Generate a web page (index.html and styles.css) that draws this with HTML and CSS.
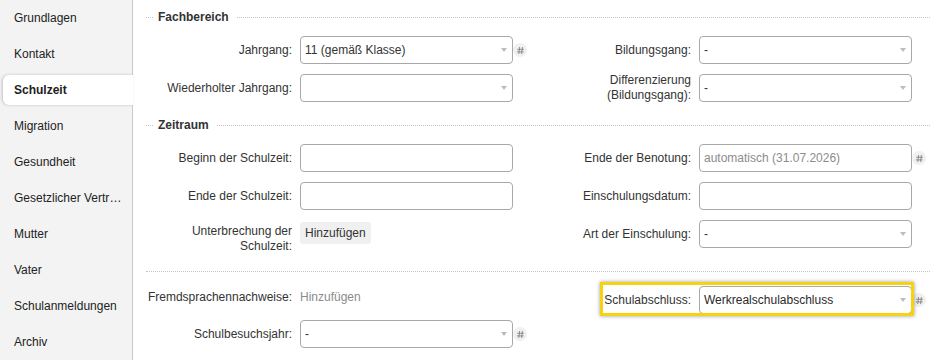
FILE: index.html
```html
<!DOCTYPE html>
<html lang="de">
<head>
  <meta charset="UTF-8">
  <title>Schulzeit</title>
  <link rel="stylesheet" href="styles.css">
</head>
<body>

<div class="app">
  <nav class="sidebar">
    <a class="nav-item">Grundlagen</a>
    <a class="nav-item">Kontakt</a>
    <a class="nav-item active">Schulzeit</a>
    <a class="nav-item">Migration</a>
    <a class="nav-item">Gesundheit</a>
    <a class="nav-item">Gesetzlicher Vertreter</a>
    <a class="nav-item">Mutter</a>
    <a class="nav-item">Vater</a>
    <a class="nav-item">Schulanmeldungen</a>
    <a class="nav-item">Archiv</a>
  </nav>

  <main class="content">
    <div class="section-title">Fachbereich</div>
    <div class="form-grid">
      <div class="field">
        <label class="field-label">Jahrgang:</label>
        <div class="control select"><span class="value">11 (gemäß Klasse)</span><span class="arrow"></span></div>
        <span class="hash"><svg width="9" height="9" viewBox="0 0 9 9"><path d="M3.6 1L2.8 8M6.4 1L5.6 8M1.2 3.3H7.9M0.9 5.9H7.6" stroke="#777" stroke-width="0.8" fill="none"/></svg></span>
      </div>
      <div class="field">
        <label class="field-label">Bildungsgang:</label>
        <div class="control select"><span class="value">-</span><span class="arrow"></span></div>
      </div>
      <div class="field">
        <label class="field-label">Wiederholter Jahrgang:</label>
        <div class="control select"><span class="value"></span><span class="arrow"></span></div>
      </div>
      <div class="field">
        <label class="field-label">Differenzierung (Bildungsgang):</label>
        <div class="control select"><span class="value">-</span><span class="arrow"></span></div>
      </div>
    </div>

    <div class="section-title second">Zeitraum</div>
    <div class="form-grid">
      <div class="field">
        <label class="field-label">Beginn der Schulzeit:</label>
        <div class="control input"></div>
      </div>
      <div class="field">
        <label class="field-label">Ende der Benotung:</label>
        <div class="control input"><span class="placeholder">automatisch (31.07.2026)</span></div>
        <span class="hash"><svg width="9" height="9" viewBox="0 0 9 9"><path d="M3.6 1L2.8 8M6.4 1L5.6 8M1.2 3.3H7.9M0.9 5.9H7.6" stroke="#777" stroke-width="0.8" fill="none"/></svg></span>
      </div>
      <div class="field">
        <label class="field-label">Ende der Schulzeit:</label>
        <div class="control input"></div>
      </div>
      <div class="field">
        <label class="field-label">Einschulungsdatum:</label>
        <div class="control input"></div>
      </div>
      <div class="field field-top">
        <label class="field-label">Unterbrechung der Schulzeit:</label>
        <button class="add-btn">Hinzufügen</button>
      </div>
      <div class="field">
        <label class="field-label">Art der Einschulung:</label>
        <div class="control select"><span class="value">-</span><span class="arrow"></span></div>
      </div>
    </div>

    <div class="divider"></div>

    <div class="form-grid tight">
      <div class="field short">
        <label class="field-label nowrap">Fremdsprachennachweise:</label>
        <a class="add-link">Hinzufügen</a>
      </div>
      <div class="field highlighted">
        <label class="field-label">Schulabschluss:</label>
        <div class="control select"><span class="value dark">Werkrealschulabschluss</span><span class="arrow"></span></div>
        <span class="hash"><svg width="9" height="9" viewBox="0 0 9 9"><path d="M3.6 1L2.8 8M6.4 1L5.6 8M1.2 3.3H7.9M0.9 5.9H7.6" stroke="#777" stroke-width="0.8" fill="none"/></svg></span>
        <span class="spotlight"></span>
      </div>
      <div class="field">
        <label class="field-label">Schulbesuchsjahr:</label>
        <div class="control select"><span class="value">-</span><span class="arrow"></span></div>
        <span class="hash"><svg width="9" height="9" viewBox="0 0 9 9"><path d="M3.6 1L2.8 8M6.4 1L5.6 8M1.2 3.3H7.9M0.9 5.9H7.6" stroke="#777" stroke-width="0.8" fill="none"/></svg></span>
      </div>
    </div>
  </main>
</div>

</body>
</html>
```

FILE: styles.css
```css
body {
  margin: 0;
  font-family: "Liberation Sans", Arial, sans-serif;
  font-size: 12px;
  color: #333;
  background: white;
}

.app {
  display: flex;
  min-height: 360px;
}

.sidebar {
  width: 133px;
  box-sizing: border-box;
  flex-shrink: 0;
  background: #f3f3f3;
  border-right: 1px solid #c9c9c9;
  padding-top: 3px;
  display: flex;
  flex-direction: column;
  gap: 6px;
}

.nav-item {
  display: block;
  height: 30px;
  line-height: 30px;
  margin-left: 3px;
  padding: 0 9px 0 11px;
  color: #222;
  white-space: nowrap;
  overflow: hidden;
  text-overflow: ellipsis;
}

.nav-item.active {
  background: white;
  font-weight: bold;
  margin-right: -1px;
  padding-right: 10px;
  border-radius: 6px 0 0 6px;
  box-shadow: -1px 0 3px rgba(0,0,0,0.2);
  position: relative;
}

.content {
  flex: 1;
  padding: 6px 5px 0 13px;
}

.section-title {
  display: flex;
  align-items: center;
  height: 22px;
  font-weight: bold;
  color: #333;
  margin-bottom: 8px;
}

.section-title::before,
.section-title::after {
  content: "";
  border-top: 1px dotted #c4c4c4;
}

.section-title::before {
  width: 7px;
  margin-right: 5px;
}

.section-title::after {
  flex: 1;
  margin-left: 8px;
}

.section-title.second {
  margin-top: 12px;
}

.form-grid {
  display: grid;
  grid-template-columns: 399px 1fr;
  row-gap: 10px;
  align-items: start;
}

.form-grid.tight {
  row-gap: 6px;
}

.field {
  display: flex;
  align-items: center;
  position: relative;
}

.field-top {
  align-items: flex-start;
}

.field-label {
  width: 146px;
  flex-shrink: 0;
  text-align: right;
  line-height: 15px;
  margin: -1px 8px -1px 0;
  color: #333;
}

.field-top .field-label {
  padding-top: 5px;
}

.nowrap {
  white-space: nowrap;
}

.field.short {
  height: 22px;
}

.control {
  width: 213px;
  height: 28px;
  box-sizing: border-box;
  border: 1px solid #a8a8a8;
  border-radius: 4px;
  background: white;
  display: flex;
  align-items: center;
  padding: 0 5px 0 4px;
}

.value {
  flex: 1;
  color: #333;
  white-space: nowrap;
}

.value.dark {
  color: #2a2a2a;
}

.placeholder {
  color: #8c8c8c;
}

.arrow {
  width: 0;
  height: 0;
  border-left: 3.5px solid transparent;
  border-right: 3.5px solid transparent;
  border-top: 4px solid #bcbcbc;
}

.hash {
  width: 14px;
  height: 14px;
  border-radius: 50%;
  background: #f0f0f0;
  display: flex;
  align-items: center;
  justify-content: center;
}

.add-btn {
  margin-top: 2px;
  height: 22px;
  padding: 0 5px;
  border: none;
  border-radius: 3px;
  background: #f0f0f0;
  font-family: inherit;
  font-size: 12px;
  color: #333;
}

.add-link {
  color: #8a8a8a;
}

.divider {
  border-top: 1px dotted #c4c4c4;
  margin: 18px 0 14px;
}

.spotlight {
  position: absolute;
  left: 55px;
  top: -4px;
  width: 314px;
  height: 34px;
  box-sizing: border-box;
  border: 3px solid #f5d312;
  box-shadow: 0 0 4px rgba(0,0,0,0.4);
  pointer-events: none;
}
```
